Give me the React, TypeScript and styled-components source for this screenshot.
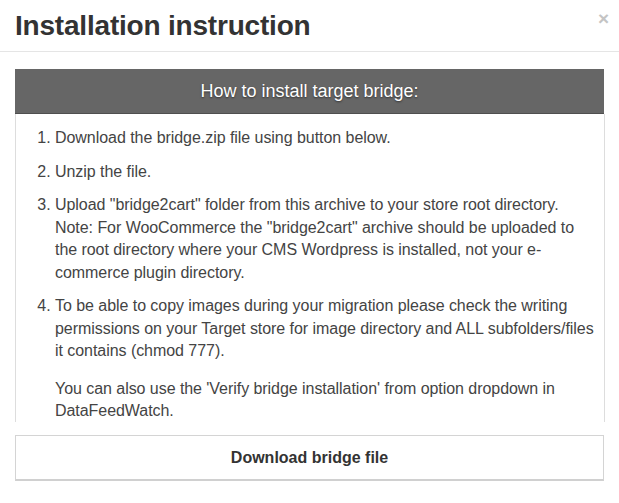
import React from "react";
import styled, { createGlobalStyle } from "styled-components";

const GlobalStyle = createGlobalStyle`
  html, body {
    margin: 0;
    padding: 0;
    background: #fff;
  }
  body {
    font-family: "Liberation Sans", Arial, sans-serif;
    color: #333;
  }
`;

const Modal = styled.div`
  width: 619px;
  height: 503px;
  background: #fff;
  overflow: hidden;
`;

const ModalHeader = styled.div`
  position: relative;
  height: 52px;
  border-bottom: 1px solid #e5e5e5;
  padding: 0 15px;
  box-sizing: border-box;
`;

const Title = styled.h4`
  margin: 0;
  padding-top: 6px;
  font-size: 28px;
  line-height: 40px;
  font-weight: bold;
  color: #333;
  letter-spacing: -0.2px;
`;

const Close = styled.span`
  position: absolute;
  top: 9px;
  right: 10px;
  font-size: 19px;
  font-weight: bold;
  color: #c4c4c4;
  line-height: 20px;
`;

const ModalBody = styled.div`
  padding: 17px 15px 0;
`;

const BarTitle = styled.div`
  height: 44px;
  background: #666;
  border-bottom: 1px solid #4f4f4f;
  color: #fff;
  font-size: 18px;
  line-height: 44px;
  text-align: center;
  text-shadow: 0 1px 2px rgba(0, 0, 0, 0.5);
`;

const Steps = styled.div`
  height: 308px;
  border: 1px solid #ddd;
  border-top: none;
  border-bottom: none;
  margin-right: -1px;
  overflow: hidden;
  box-sizing: border-box;
  padding-top: 13px;
`;

const List = styled.ol`
  margin: 0;
  padding: 0 4px 0 39px;
  font-size: 16px;
  line-height: 22.5px;
  color: #444;
  letter-spacing: -0.05px;
`;

const Step = styled.li`
  margin-bottom: 11px;
`;

const Extra = styled.div`
  margin-top: 15px;
`;

const DownloadButton = styled.button`
  display: block;
  width: 100%;
  margin-top: 13px;
  height: 46px;
  background: #fff;
  border: 1px solid #d4d4d4;
  border-bottom: 2px solid #d0d0d0;
  font-family: "Liberation Sans", Arial, sans-serif;
  font-size: 16px;
  font-weight: bold;
  color: #333;
  cursor: pointer;
`;

export default function App() {
  return (
    <>
      <GlobalStyle />
      <Modal>
        <ModalHeader>
          <Title>Installation instruction</Title>
          <Close>×</Close>
        </ModalHeader>
        <ModalBody>
          <BarTitle>How to install target bridge:</BarTitle>
          <Steps>
            <List>
              <Step>Download the bridge.zip file using button below.</Step>
              <Step>Unzip the file.</Step>
              <Step>
                Upload "bridge2cart" folder from this archive to your store root
                directory. Note: For WooCommerce the "bridge2cart" archive should
                be uploaded to the root directory where your CMS Wordpress is
                installed, not your e-commerce plugin directory.
              </Step>
              <Step>
                To be able to copy images during your migration please check the
                writing permissions on your Target store for image directory and
                ALL subfolders/files it contains (chmod 777).
                <Extra>
                  You can also use the 'Verify bridge installation' from option
                  dropdown in DataFeedWatch.
                </Extra>
              </Step>
            </List>
          </Steps>
          <DownloadButton>Download bridge file</DownloadButton>
        </ModalBody>
      </Modal>
    </>
  );
}
